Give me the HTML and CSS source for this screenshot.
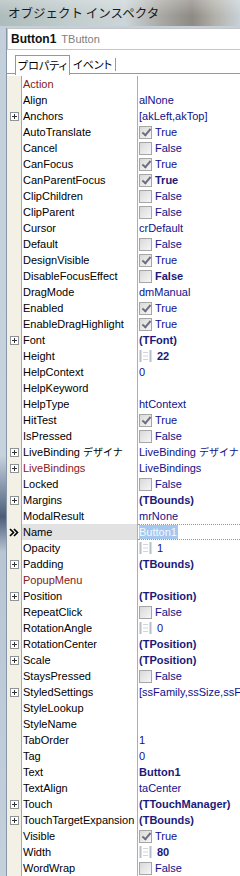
FILE: index.html
```html
<!DOCTYPE html>
<html lang="ja">
<head>
  <meta charset="UTF-8" />
  <title>オブジェクト インスペクタ</title>
  <link rel="stylesheet" href="styles.css">
</head>
<body>
  <div class="titlebar">オブジェクト インスペクタ</div>

  <div class="panel">
    <div class="objbox">
      <span class="objname">Button1</span>
      <span class="objtype">TButton</span>
    </div>

    <div class="tabs">
      <span class="tab active">プロパティ</span>
      <span class="tab">イベント</span>
    </div>

    <div class="grid">
      <div class="row"><span class="gut"></span><span class="nm ev">Action</span><span class="val"></span></div>
      <div class="row"><span class="gut"></span><span class="nm">Align</span><span class="val">alNone</span></div>
      <div class="row"><span class="gut"><i class="plus"></i></span><span class="nm">Anchors</span><span class="val">[akLeft,akTop]</span></div>
      <div class="row"><span class="gut"></span><span class="nm">AutoTranslate</span><span class="val"><i class="cb on"></i>True</span></div>
      <div class="row"><span class="gut"></span><span class="nm">Cancel</span><span class="val"><i class="cb"></i>False</span></div>
      <div class="row"><span class="gut"></span><span class="nm">CanFocus</span><span class="val"><i class="cb on"></i>True</span></div>
      <div class="row"><span class="gut"></span><span class="nm">CanParentFocus</span><span class="val b"><i class="cb on"></i>True</span></div>
      <div class="row"><span class="gut"></span><span class="nm">ClipChildren</span><span class="val"><i class="cb"></i>False</span></div>
      <div class="row"><span class="gut"></span><span class="nm">ClipParent</span><span class="val"><i class="cb"></i>False</span></div>
      <div class="row"><span class="gut"></span><span class="nm">Cursor</span><span class="val">crDefault</span></div>
      <div class="row"><span class="gut"></span><span class="nm">Default</span><span class="val"><i class="cb"></i>False</span></div>
      <div class="row"><span class="gut"></span><span class="nm">DesignVisible</span><span class="val"><i class="cb on"></i>True</span></div>
      <div class="row"><span class="gut"></span><span class="nm">DisableFocusEffect</span><span class="val b"><i class="cb"></i>False</span></div>
      <div class="row"><span class="gut"></span><span class="nm">DragMode</span><span class="val">dmManual</span></div>
      <div class="row"><span class="gut"></span><span class="nm">Enabled</span><span class="val"><i class="cb on"></i>True</span></div>
      <div class="row"><span class="gut"></span><span class="nm">EnableDragHighlight</span><span class="val"><i class="cb on"></i>True</span></div>
      <div class="row"><span class="gut"><i class="plus"></i></span><span class="nm">Font</span><span class="val b">(TFont)</span></div>
      <div class="row"><span class="gut"></span><span class="nm">Height</span><span class="val b"><svg class="spin" width="13" height="14" viewBox="0 0 13 14"><path d="M1.5 1v12M11.5 1v12" stroke="#b8c0c8" stroke-width="2" fill="none"/><path d="M4 3.5h5M4 7h5M4 10.5h5" stroke="#d0d6dc" stroke-width="1" fill="none"/></svg>22</span></div>
      <div class="row"><span class="gut"></span><span class="nm">HelpContext</span><span class="val">0</span></div>
      <div class="row"><span class="gut"></span><span class="nm">HelpKeyword</span><span class="val"></span></div>
      <div class="row"><span class="gut"></span><span class="nm">HelpType</span><span class="val">htContext</span></div>
      <div class="row"><span class="gut"></span><span class="nm">HitTest</span><span class="val"><i class="cb on"></i>True</span></div>
      <div class="row"><span class="gut"></span><span class="nm">IsPressed</span><span class="val"><i class="cb"></i>False</span></div>
      <div class="row"><span class="gut"><i class="plus"></i></span><span class="nm">LiveBinding <span class="jp">デザイナ</span></span><span class="val"><span>LiveBinding <span class="jp">デザイナ</span></span></span></div>
      <div class="row"><span class="gut"><i class="plus"></i></span><span class="nm ev">LiveBindings</span><span class="val">LiveBindings</span></div>
      <div class="row"><span class="gut"></span><span class="nm">Locked</span><span class="val"><i class="cb"></i>False</span></div>
      <div class="row"><span class="gut"><i class="plus"></i></span><span class="nm">Margins</span><span class="val b">(TBounds)</span></div>
      <div class="row"><span class="gut"></span><span class="nm">ModalResult</span><span class="val">mrNone</span></div>
      <div class="row sel"><span class="gut"><svg class="arrow" width="10" height="9" viewBox="0 0 10 9"><path d="M1 1l3.5 3.5L1 8M5 1l3.5 3.5L5 8" stroke="#000" stroke-width="1.6" fill="none"/></svg></span><span class="nm">Name</span><span class="val"><span class="hl">Button1</span></span></div>
      <div class="row"><span class="gut"></span><span class="nm">Opacity</span><span class="val"><svg class="spin" width="13" height="14" viewBox="0 0 13 14"><path d="M1.5 1v12M11.5 1v12" stroke="#b8c0c8" stroke-width="2" fill="none"/><path d="M4 3.5h5M4 7h5M4 10.5h5" stroke="#d0d6dc" stroke-width="1" fill="none"/></svg>1</span></div>
      <div class="row"><span class="gut"><i class="plus"></i></span><span class="nm">Padding</span><span class="val b">(TBounds)</span></div>
      <div class="row"><span class="gut"></span><span class="nm ev">PopupMenu</span><span class="val"></span></div>
      <div class="row"><span class="gut"><i class="plus"></i></span><span class="nm">Position</span><span class="val b">(TPosition)</span></div>
      <div class="row"><span class="gut"></span><span class="nm">RepeatClick</span><span class="val"><i class="cb"></i>False</span></div>
      <div class="row"><span class="gut"></span><span class="nm">RotationAngle</span><span class="val"><svg class="spin" width="13" height="14" viewBox="0 0 13 14"><path d="M1.5 1v12M11.5 1v12" stroke="#b8c0c8" stroke-width="2" fill="none"/><path d="M4 3.5h5M4 7h5M4 10.5h5" stroke="#d0d6dc" stroke-width="1" fill="none"/></svg>0</span></div>
      <div class="row"><span class="gut"><i class="plus"></i></span><span class="nm">RotationCenter</span><span class="val b">(TPosition)</span></div>
      <div class="row"><span class="gut"><i class="plus"></i></span><span class="nm">Scale</span><span class="val b">(TPosition)</span></div>
      <div class="row"><span class="gut"></span><span class="nm">StaysPressed</span><span class="val"><i class="cb"></i>False</span></div>
      <div class="row"><span class="gut"><i class="plus"></i></span><span class="nm">StyledSettings</span><span class="val">[ssFamily,ssSize,ssFontColor,ssStyle]</span></div>
      <div class="row"><span class="gut"></span><span class="nm">StyleLookup</span><span class="val"></span></div>
      <div class="row"><span class="gut"></span><span class="nm">StyleName</span><span class="val"></span></div>
      <div class="row"><span class="gut"></span><span class="nm">TabOrder</span><span class="val">1</span></div>
      <div class="row"><span class="gut"></span><span class="nm">Tag</span><span class="val">0</span></div>
      <div class="row"><span class="gut"></span><span class="nm">Text</span><span class="val b">Button1</span></div>
      <div class="row"><span class="gut"></span><span class="nm">TextAlign</span><span class="val">taCenter</span></div>
      <div class="row"><span class="gut"><i class="plus"></i></span><span class="nm">Touch</span><span class="val b">(TTouchManager)</span></div>
      <div class="row"><span class="gut"><i class="plus"></i></span><span class="nm">TouchTargetExpansion</span><span class="val b">(TBounds)</span></div>
      <div class="row"><span class="gut"></span><span class="nm">Visible</span><span class="val"><i class="cb on"></i>True</span></div>
      <div class="row"><span class="gut"></span><span class="nm">Width</span><span class="val b"><svg class="spin" width="13" height="14" viewBox="0 0 13 14"><path d="M1.5 1v12M11.5 1v12" stroke="#b8c0c8" stroke-width="2" fill="none"/><path d="M4 3.5h5M4 7h5M4 10.5h5" stroke="#d0d6dc" stroke-width="1" fill="none"/></svg>80</span></div>
      <div class="row"><span class="gut"></span><span class="nm">WordWrap</span><span class="val"><i class="cb"></i>False</span></div>
    </div>
  </div>
</body>
</html>
```

FILE: styles.css
```css
body {
  margin: 0;
  width: 240px;
  height: 876px;
  overflow: hidden;
  font-family: "Liberation Sans", Arial, sans-serif;
  font-size: 11px;
  background: linear-gradient(180deg, #c3cfdb 0%, #c6d2de 52%, #6f8098 57%, #4c5d78 59%, #b8c6d4 63%, #c4d0dc 100%);
}

.titlebar {
  height: 26px;
  line-height: 26px;
  padding-left: 8px;
  font-family: "Noto Sans CJK JP", sans-serif;
  font-size: 12.5px;
  color: #1b1b1b;
  background:
    linear-gradient(180deg, rgba(255,255,255,0.25), rgba(255,255,255,0) 60%),
    linear-gradient(90deg, #aebcbb 0%, #c2cdcd 30%, #ccd5d8 52%, #a7a6a0 68%, #8e8a84 80%, #b3b2ab 90%, #c8d1d6 100%);
}

.panel {
  margin-left: 6px;
  border-left: 1px solid #8796a6;
  background: #fff;
  height: 850px;
}

.objbox {
  margin-top: 2px;
  height: 20px;
  border: 1px solid #c6c6c6;
  border-right: none;
  padding-left: 3px;
  display: flex;
  align-items: center;
  gap: 5px;
}

.objname {
  font-size: 12px;
  font-weight: bold;
  color: #111;
}

.objtype {
  color: #808080;
}

.tabs {
  margin-top: 5px;
  height: 18px;
  padding-left: 8px;
  display: flex;
  border-bottom: 1px solid #919b9c;
}

.tab {
  font-family: "Noto Sans CJK JP", sans-serif;
  font-size: 11px;
  font-feature-settings: "palt";
  line-height: 18px;
  color: #000;
  padding: 0 3px;
}

.tab.active {
  border: 1px solid #919b9c;
  border-bottom: none;
  background: #fff;
  height: 19px;
  margin-bottom: -1px;
  padding: 0 2px;
}

.tab + .tab {
  height: 13px;
  line-height: 13px;
  margin-top: 3px;
  border-right: 1px solid #9a9a9a;
}

.grid {
  margin-top: 2px;
}

.row {
  display: grid;
  grid-template-columns: 15px 116px 1fr;
  height: 16px;
  line-height: 16px;
}

.gut {
  background: #f3f1e6;
  border-right: 1px solid #a9a89c;
  display: flex;
  align-items: center;
  padding-left: 3px;
}

.nm {
  border-right: 1px solid #aeb0a6;
  padding-left: 1px;
  white-space: nowrap;
  overflow: hidden;
  color: #000;
}

.nm.ev {
  color: #842020;
}

.val {
  padding-left: 1px;
  white-space: nowrap;
  overflow: hidden;
  color: #10108a;
  display: flex;
  align-items: center;
}

.val.b {
  font-weight: bold;
  color: #1a1a78;
}

.jp {
  font-family: "Noto Sans CJK JP", sans-serif;
  font-size: 10px;
}

.nm .jp {
  color: #000;
}

.plus {
  position: relative;
  box-sizing: border-box;
  width: 9px;
  height: 9px;
  border: 1px solid #8f9398;
  background: #fff;
}

.plus::before,
.plus::after {
  content: "";
  position: absolute;
  background: #333;
}

.plus::before {
  left: 1px;
  top: 3px;
  width: 5px;
  height: 1px;
}

.plus::after {
  left: 3px;
  top: 1px;
  width: 1px;
  height: 5px;
}

.cb {
  position: relative;
  box-sizing: border-box;
  width: 13px;
  height: 13px;
  margin-right: 3px;
  border: 1px solid #a6a6a6;
  background: linear-gradient(135deg, #d9d9d9, #f6f6f6);
  flex: none;
}

.cb.on::after {
  content: "";
  position: absolute;
  left: 4px;
  top: 0;
  width: 3px;
  height: 7px;
  border: solid #6e7080;
  border-width: 0 2px 2px 0;
  transform: rotate(40deg);
}

.spin {
  margin-right: 5px;
  flex: none;
}

.arrow {
  margin-left: -1px;
}

.row.sel .nm {
  background: #e2e2e2;
}

.row.sel .val {
  border-top: 1px dotted #999;
  border-bottom: 1px dotted #999;
  line-height: 14px;
}

.hl {
  background: #a4c8ee;
  color: #f4f9ff;
  padding-right: 1px;
}
```
